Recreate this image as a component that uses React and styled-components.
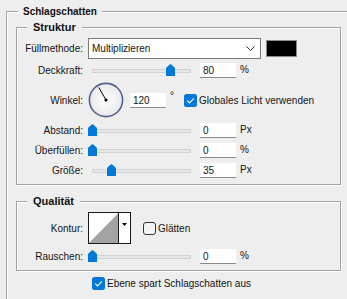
import styled, { createGlobalStyle } from 'styled-components';

const GlobalStyle = createGlobalStyle`
  html, body {
    margin: 0;
    background: #eeeeee;
    overflow: hidden;
  }
  body {
    font-family: "Liberation Sans", Arial, sans-serif;
    font-size: 10px;
    color: #151515;
  }
`;

const Page = styled.div`
  width: 347px;
  height: 299px;
  overflow: hidden;
`;

const Group = styled.fieldset`
  box-sizing: border-box;
  margin: ${(p) => p.$margin || '0'};
  padding: ${(p) => p.$padding || '0'};
  width: ${(p) => p.$width || 'auto'};
  min-height: ${(p) => p.$minHeight || '0'};
  border: 1px solid #a3a3a3;
  box-shadow: 1px 1px 0 #fff, inset 1px 1px 0 #fff;
  min-inline-size: 0;
`;

const Legend = styled.legend`
  margin-left: ${(p) => p.$offset}px;
  padding: 0 ${(p) => p.$pad}px;
  height: 13px;
  line-height: 13px;
  font-weight: bold;
  font-size: ${(p) => p.$size || 10}px;
  color: #111;
  background: #eeeeee;
`;

const Stack = styled.div`
  display: flex;
  flex-direction: column;
  gap: ${(p) => p.$gap || 4}px;
`;

const Row = styled.div`
  display: flex;
  align-items: center;
  height: ${(p) => p.$h || 16}px;
  margin-top: ${(p) => p.$mt || 0}px;
`;

const Label = styled.div`
  width: 66px;
  margin-right: 5px;
  text-align: right;
  white-space: nowrap;
  flex-shrink: 0;
`;

const Select = styled.div`
  box-sizing: border-box;
  width: 173px;
  height: 21px;
  background: #fff;
  border: 1px solid #7a7a7a;
  display: flex;
  align-items: center;
  justify-content: space-between;
  padding: 0 5px 0 3px;
`;

const Swatch = styled.div`
  box-sizing: border-box;
  width: 31px;
  height: 17px;
  margin-left: 5px;
  background: #000;
  border: 1px solid #8c8c8c;
`;

const SliderBox = styled.div`
  position: relative;
  width: 107px;
  height: 16px;
  flex-shrink: 0;
`;

const Track = styled.div`
  position: absolute;
  left: 4px;
  right: 4px;
  top: 7px;
  height: 4px;
  box-sizing: border-box;
  background: #e6e6e6;
  border: 1px solid #d2d2d2;
`;

const Thumb = styled.svg`
  position: absolute;
  top: 2px;
  width: 9px;
  height: 12px;
`;

const NumInput = styled.div`
  box-sizing: border-box;
  width: 36px;
  height: 15px;
  margin-left: ${(p) => p.$ml ?? 5}px;
  background: #fff;
  border-bottom: 1px solid #8a8a8a;
  padding-left: 3px;
  line-height: 15px;
  flex-shrink: 0;
`;

const Unit = styled.span`
  margin-left: 4px;
  align-self: ${(p) => (p.$sup ? 'flex-start' : 'center')};
  margin-top: ${(p) => (p.$sup ? 8 : 0)}px;
  margin-bottom: 2px;
`;

const CheckLabel = styled.label`
  display: flex;
  align-items: center;
  gap: 2px;
  margin-left: ${(p) => p.$ml || 0}px;
  white-space: nowrap;
`;

const Dial = styled.svg`
  width: 36px;
  height: 36px;
  flex-shrink: 0;
`;

const ContourBox = styled.svg`
  width: 43px;
  height: 32px;
  flex-shrink: 0;
`;

const Footer = styled.div`
  display: flex;
  height: 13px;
  margin-top: 6px;
  padding-left: 85px;
`;

const Slider = ({ ratio }) => (
  <SliderBox>
    <Track />
    <Thumb viewBox="0 0 9 12" style={{ left: `${Math.round(ratio * 98)}px` }}>
      <path
        d="M0 12 V4.6 Q0 3.6 1 2.9 L3.7 0.6 Q4.5 0 5.3 0.6 L8 2.9 Q9 3.6 9 4.6 V12 Z"
        fill="#0078d7"
      />
    </Thumb>
  </SliderBox>
);

const CheckBox = ({ checked }) => (
  <svg width="13" height="13" viewBox="0 0 13 13">
    {checked ? (
      <>
        <rect x="0" y="0" width="13" height="13" rx="2.5" fill="#0078d7" />
        <polyline
          points="3.2,6.6 5.5,8.9 9.9,4.3"
          fill="none"
          stroke="#fff"
          strokeWidth="1.1"
        />
      </>
    ) : (
      <rect x="0.5" y="0.5" width="12" height="12" rx="2.5" fill="#f4f4f4" stroke="#333" />
    )}
  </svg>
);

const SliderRow = ({ label, ratio, value, unit }) => (
  <Row>
    <Label>{label}</Label>
    <Slider ratio={ratio} />
    <NumInput>{value}</NumInput>
    <Unit>{unit}</Unit>
  </Row>
);

const App = () => {
  const angle = (120 * Math.PI) / 180;
  const hx = 18 + 14.5 * Math.cos(angle);
  const hy = 18 - 14.5 * Math.sin(angle);

  return (
    <Page>
      <GlobalStyle />
      <Group $margin="5px 0 0 6px" $width="400px" $minHeight="320px">
        <Legend $offset={11} $pad={5}>Schlagschatten</Legend>

        <Group $margin="3px 0 0 9px" $width="325px" $padding="4px 0 6px 0">
          <Legend $offset={10} $pad={6} $size={11}>Struktur</Legend>
          <Stack $gap={4}>
            <Row $h={21}>
              <Label>Füllmethode:</Label>
              <Select>
                <span>Multiplizieren</span>
                <svg width="9" height="5" viewBox="0 0 9 5">
                  <polyline points="0.5,0.5 4.5,4.5 8.5,0.5" fill="none" stroke="#333" strokeWidth="1" />
                </svg>
              </Select>
              <Swatch />
            </Row>
            <Row $mt={-1}>
              <Label>Deckkraft:</Label>
              <Slider ratio={0.8} />
              <NumInput>80</NumInput>
              <Unit>%</Unit>
            </Row>
            <Row $h={36}>
              <Label>Winkel:</Label>
              <Dial viewBox="0 0 36 36">
                <defs>
                  <radialGradient id="dialFill" cx="50%" cy="50%" r="50%">
                    <stop offset="0%" stopColor="#ffffff" />
                    <stop offset="100%" stopColor="#e9e9ec" />
                  </radialGradient>
                </defs>
                <circle cx="18" cy="18" r="16.6" fill="url(#dialFill)" stroke="#56618a" strokeWidth="1.6" />
                <line x1="18" y1="18" x2={hx} y2={hy} stroke="#000" strokeWidth="1" />
                <circle cx="18" cy="18" r="1.6" fill="#000" />
              </Dial>
              <NumInput $ml={6}>120</NumInput>
              <Unit $sup>°</Unit>
              <CheckLabel $ml={10}>
                <CheckBox checked />
                <span>Globales Licht verwenden</span>
              </CheckLabel>
            </Row>
            <SliderRow label="Abstand:" ratio={0} value="0" unit="Px" />
            <SliderRow label="Überfüllen:" ratio={0} value="0" unit="%" />
            <SliderRow label="Größe:" ratio={0.194} value="35" unit="Px" />
          </Stack>
        </Group>

        <Group $margin="10px 0 0 9px" $width="325px" $padding="4px 0 6px 0">
          <Legend $offset={10} $pad={6} $size={11}>Qualität</Legend>
          <Stack $gap={4}>
            <Row $h={32}>
              <Label>Kontur:</Label>
              <ContourBox viewBox="0 0 43 32">
                <rect x="0.5" y="0.5" width="42" height="31" fill="#fff" stroke="#1a1a1a" />
                <polygon points="1,31 30.5,1 30.5,31" fill="#a3a3a3" />
                <line x1="30.5" y1="0.5" x2="30.5" y2="31.5" stroke="#1a1a1a" />
                <polygon points="34,11 39,11 36.5,14" fill="#000" />
              </ContourBox>
              <CheckLabel $ml={12}>
                <CheckBox />
                <span>Glätten</span>
              </CheckLabel>
            </Row>
            <SliderRow label="Rauschen:" ratio={0} value="0" unit="%" />
          </Stack>
        </Group>

        <Footer>
          <CheckLabel>
            <CheckBox checked />
            <span>Ebene spart Schlagschatten aus</span>
          </CheckLabel>
        </Footer>
      </Group>
    </Page>
  );
};

export default App;
